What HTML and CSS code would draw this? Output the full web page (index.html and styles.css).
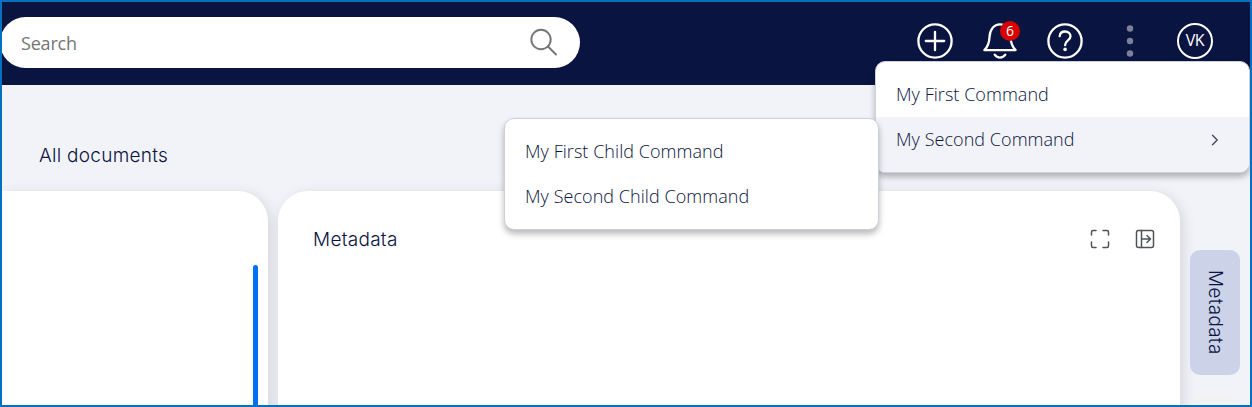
FILE: index.html
```html
<!DOCTYPE html>
<html lang="en">
<head>
<meta charset="utf-8">
<title>All documents</title>
<link rel="stylesheet" href="styles.css">
</head>
<body>
<div class="app">
  <header class="topbar">
    <div class="search">
      <span class="search-label">Search</span>
      <svg class="search-icon" width="30" height="30" viewBox="0 0 30 30"><circle cx="12" cy="11.500" r="9.700"/><path d="M19 18.500l8 8"/></svg>
    </div>
    <nav class="actions">
      <svg class="icon" viewBox="0 0 36 36"><circle cx="18" cy="18" r="16.600"/><path d="M18 8.800v18.400M8.800 18h18.400"/></svg>
      <div class="bell">
        <svg class="icon" viewBox="0 0 36 36"><path d="M2.400 27.100h31.200c-4-4-4.900-8-5.100-13C28.200 6.600 24 1.300 18 1.300S7.800 6.600 7.500 14.100c-.2 5-1.100 9-5.100 13z"/><path d="M12.700 31.700c2.600 3.800 8 3.800 10.600 0"/></svg>
        <span class="badge">6</span>
      </div>
      <svg class="icon" viewBox="0 0 36 36"><circle cx="18" cy="18" r="16.600"/><path d="M12.700 13.200c.2-3.100 2.500-4.700 5.400-4.700 3.100 0 5.400 1.900 5.400 4.700 0 4.200-5.400 4.300-5.400 9"/><circle class="dot" cx="18.100" cy="26.400" r="1.800"/></svg>
      <svg class="icon more" viewBox="0 0 36 36"><circle cx="18" cy="5.500" r="3.200"/><circle cx="18" cy="18" r="3.200"/><circle cx="18" cy="30.500" r="3.200"/></svg>
      <div class="avatar">VK</div>
    </nav>
  </header>
  <h1 class="page-title">All documents</h1>
  <main class="workspace">
    <section class="panel list-panel"><div class="scroll-thumb"></div></section>
    <section class="panel detail-panel">
      <h2 class="panel-title">Metadata</h2>
      <div class="tools">
        <svg width="20" height="20" viewBox="0 0 20 20"><path d="M1.500 6V3q0-1.500 1.500-1.500h3M13 1.500h4q1.500 0 1.500 1.500v3M18.500 13v4q0 1.500-1.500 1.500h-4M6 18.500H3Q1.500 18.500 1.500 17v-4"/></svg>
        <svg width="20" height="20" viewBox="0 0 20 20"><rect x="1.500" y="1.500" width="17" height="17" rx="2"/><path d="M6.500 1.500v17M6.500 10h8.500M12 6.500l3.500 3.500-3.500 3.500"/></svg>
      </div>
    </section>
    <aside class="rail">
      <div class="tab"><span>Metadata</span></div>
      <div class="tab-next"></div>
    </aside>
  </main>
  <div class="menu main-menu">
    <div class="item">My First Command</div>
    <div class="item active">My Second Command
      <svg width="12" height="12" viewBox="0 0 12 12"><path d="M3.500 1.200l4.700 4.800-4.700 4.800"/></svg>
    </div>
  </div>
  <div class="menu child-menu">
    <div class="item">My First Child Command</div>
    <div class="item">My Second Child Command</div>
  </div>
</div>
</body>
</html>
```
FILE: styles.css
```css
* { box-sizing: border-box; }
body { margin: 0; font-family: "Open Sans", "Noto Sans", sans-serif; color: #0a1440; }
svg { display: block; fill: none; stroke-linecap: round; stroke-linejoin: round; }
.app {
  position: relative;
  display: flex;
  flex-direction: column;
  width: 1252px;
  height: 407px;
  overflow: hidden;
  border: 2px solid #0070c0;
  background: #f2f3f9;
}
.topbar {
  display: flex;
  justify-content: space-between;
  flex: none;
  height: 83px;
  padding: 15px 37px 0 0;
  background: #0a1440;
}
.search {
  display: flex;
  justify-content: space-between;
  align-items: center;
  width: 580px;
  height: 51px;
  margin-left: -2px;
  padding: 0 21px 0 21px;
  border-radius: 26px;
  background: #fff;
  color: #757575;
  font-size: 18px;
  letter-spacing: -0.2px;
}
.search-icon { stroke: #757575; stroke-width: 1.900; }
.actions { display: flex; gap: 29px; padding-top: 6px; }
.icon { width: 36px; height: 36px; flex: none; stroke: #fff; stroke-width: 2.300; overflow: visible; }
.dot { fill: #fff; stroke: none; }
.more { fill: #7c809b; stroke: none; }
.bell { position: relative; height: 36px; }
.badge {
  position: absolute;
  left: 18px;
  top: -2px;
  width: 20px;
  height: 20px;
  border-radius: 50%;
  background: #d60000;
  color: #fff;
  font-size: 14px;
  line-height: 20px;
  text-align: center;
}
.avatar {
  width: 36px;
  height: 36px;
  border: 2px solid #fff;
  border-radius: 50%;
  color: #fff;
  font-size: 16px;
  line-height: 31px;
  letter-spacing: -0.3px;
  text-align: center;
}
.page-title, .panel-title { margin: 0; font-family: Inter, sans-serif; font-size: 19px; font-weight: 300; line-height: 24px; letter-spacing: 0.27px; }
.page-title { flex: none; height: 106px; padding: 59px 0 0 37px; }
.workspace { display: flex; gap: 10px; flex: 1; }
.panel { border-radius: 30px 30px 0 0; background: #fff; box-shadow: 3px 3px 14px rgba(0, 0, 0, .12); }
.list-panel { display: flex; justify-content: flex-end; width: 266px; padding: 74px 10px 0 0; border-top-left-radius: 0; }
.scroll-thumb { width: 5px; border-radius: 3px 3px 0 0; background: #0070f5; }
.detail-panel { display: flex; justify-content: space-between; align-items: flex-start; width: 902px; padding: 37px 25px 0 35px; }
.tools { display: flex; gap: 25px; padding-top: 1px; stroke: #50525a; stroke-width: 1.5; }
.rail { display: flex; flex-direction: column; gap: 20px; width: 50px; padding-top: 59px; }
.tab {
  display: flex;
  align-items: center;
  justify-content: center;
  flex: none;
  height: 125px;
  border-radius: 10px;
  background: #ccd2e8;
  font: 300 19px/24px Inter, sans-serif;
  letter-spacing: 0.27px;
  writing-mode: vertical-rl;
}
.tab-next { flex: none; height: 20px; margin: 0 2px; border-radius: 10px 10px 0 0; background: #f2f2f3; }
.menu {
  position: absolute;
  width: 375px;
  height: 112px;
  padding-top: 10px;
  border: 1px solid #cccfdd;
  border-radius: 10px;
  overflow: hidden;
  background: #fff;
  box-shadow: 0 4px 6px rgba(0, 0, 0, .28);
  font-size: 18px;
  font-weight: 330;
  letter-spacing: 0.05px;
}
.main-menu { left: 873px; top: 59px; }
.child-menu { left: 502px; top: 116px; }
.item { display: flex; align-items: center; justify-content: space-between; height: 45px; padding: 0 28px 2px 20px; }
.item.active { height: 55px; padding-bottom: 12px; background: #f2f3f9; }
.item svg { margin-top: 2px; stroke: #4b4e5c; stroke-width: 1.500; }
```
